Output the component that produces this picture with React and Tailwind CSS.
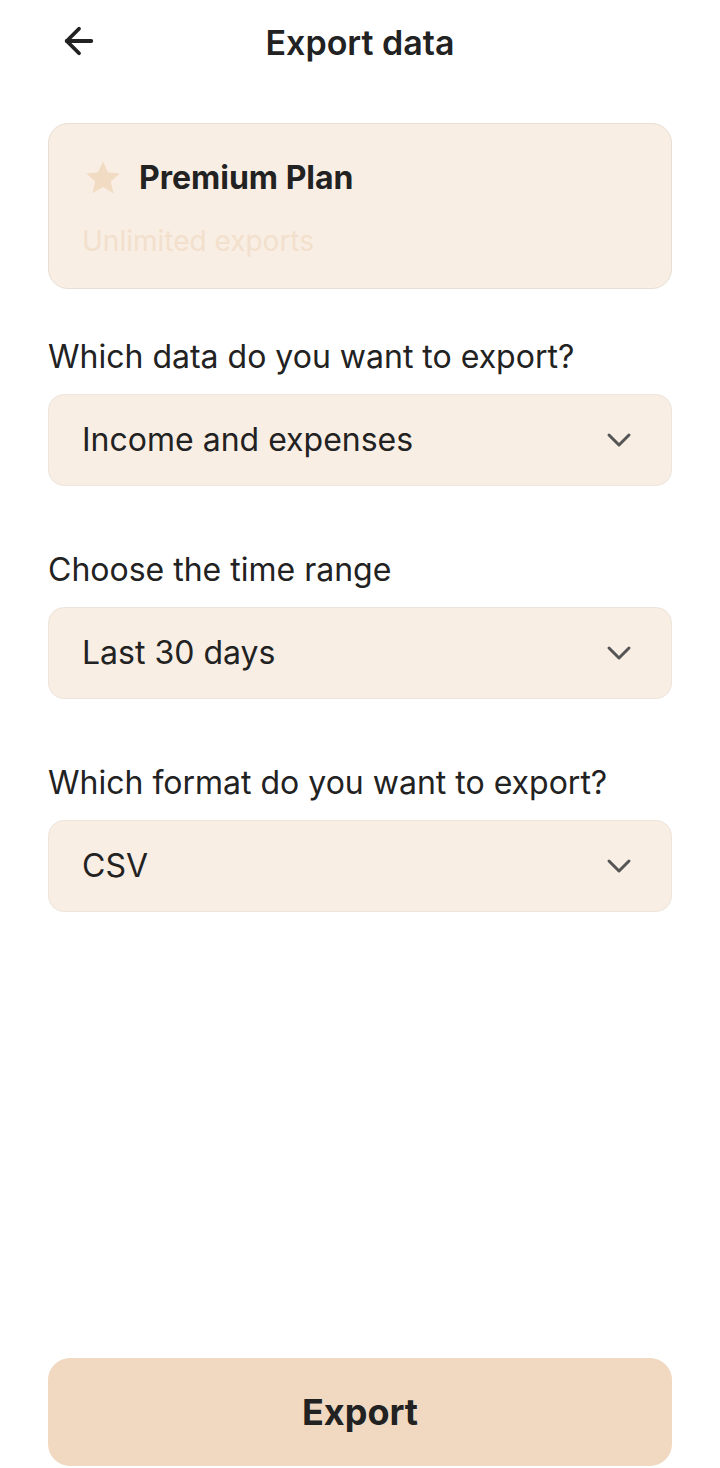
import { ArrowLeft, ChevronDown } from "lucide-react";

function Select({ label, value }) {
  return (
    <div className="flex flex-col">
      <p className="text-[32px] leading-[36px] text-[#222]">{label}</p>
      <button
        className="mt-[19px] flex h-[92px] items-center justify-between rounded-[16px] border border-[#ede4db] bg-[#f9eee4] pl-[33px] pr-[32px] text-left"
        type="button"
      >
        <span className="text-[32px] text-[#222]">{value}</span>
        <ChevronDown size={40} strokeWidth={1.8} className="text-[#555]" />
      </button>
    </div>
  );
}

export default function App() {
  return (
    <div className="flex h-[1468px] w-[720px] flex-col bg-white px-[48px] font-['Inter',sans-serif]">
      <header className="relative flex h-[84px] items-center justify-center">
        <button className="absolute left-[10px] top-[20px] text-[#222]" type="button">
          <ArrowLeft size={42} strokeWidth={2.2} />
        </button>
        <h1 className="text-[34px] font-semibold text-[#222]">Export data</h1>
      </header>

      <section className="mt-[39px] flex h-[166px] flex-col rounded-[20px] border border-[#e8ded4] bg-[#f9eee4] px-[33px] pt-[30px]">
        <div className="flex items-center gap-[15px]">
          <svg width="42" height="40" viewBox="0 0 24 24" fill="#f1dcc3">
            <path d="M12 2l2.95 6.6 7.05.7-5.3 4.8 1.55 7-6.25-3.65L5.75 21.1 7.3 14.1 2 9.3l7.05-.7z" />
          </svg>
          <p className="text-[32px] font-bold text-[#222]">Premium Plan</p>
        </div>
        <p className="mt-[18px] text-[28px] text-[#f2e0cc]">Unlimited exports</p>
      </section>

      <div className="mt-[50px] flex flex-col gap-[66px]">
        <Select label="Which data do you want to export?" value="Income and expenses" />
        <Select label="Choose the time range" value="Last 30 days" />
        <Select label="Which format do you want to export?" value="CSV" />
      </div>

      <button
        className="mt-auto mb-[2px] flex h-[108px] items-center justify-center rounded-[22px] bg-[#f0d9c0] text-[36px] font-bold text-[#222]"
        type="button"
      >
        Export
      </button>
    </div>
  );
}
